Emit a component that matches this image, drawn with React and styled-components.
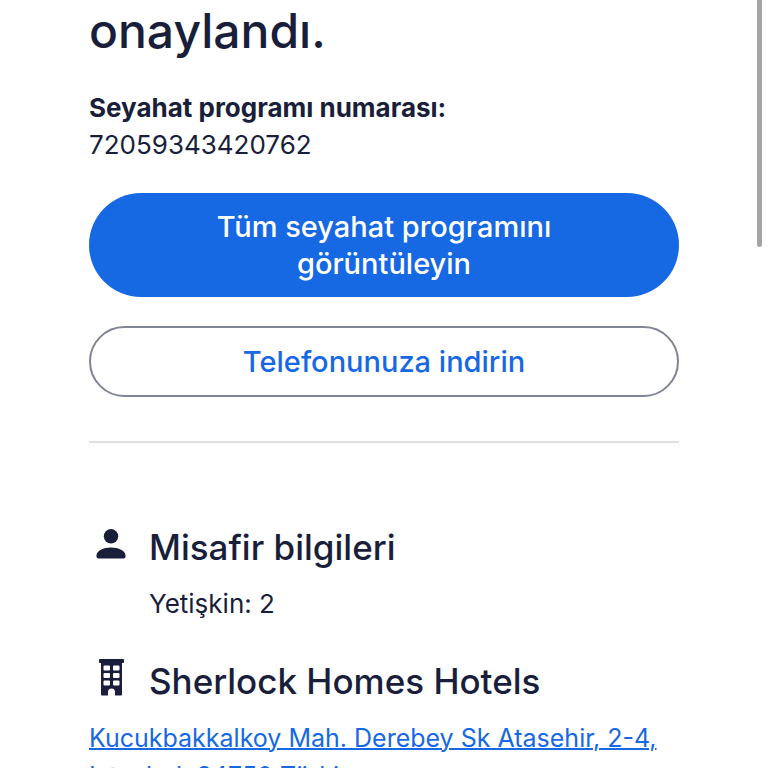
import styled, { createGlobalStyle } from "styled-components";

export default function App() {
    return (
        <>
            <GlobalStyle />
            <ScrollThumb />
            <Page>
                <Title>onaylandı.</Title>
                <Itinerary>
                    <strong>Seyahat programı numarası:</strong>
                    <span>72059343420762</span>
                </Itinerary>
                <Actions>
                    <PrimaryButton>Tüm seyahat programını görüntüleyin</PrimaryButton>
                    <SecondaryButton>Telefonunuza indirin</SecondaryButton>
                </Actions>
                <Divider />
                <Section>
                    <SectionHeader>
                        <PersonIcon />
                        <h2>Misafir bilgileri</h2>
                    </SectionHeader>
                    <Guests>Yetişkin: 2</Guests>
                </Section>
                <Section>
                    <SectionHeader>
                        <HotelIcon />
                        <h2>Sherlock Homes Hotels</h2>
                    </SectionHeader>
                    <Address href="#adres">
                        Kucukbakkalkoy Mah. Derebey Sk Atasehir, 2-4, Istanbul, 34750 Türkiye
                    </Address>
                </Section>
            </Page>
        </>
    )
}

function PersonIcon() {
    return (
        <Icon viewBox="0 0 44 44" aria-hidden="true">
            <circle cx="22" cy="14.3" r="7.2" />
            <path d="M9.500 36.500a2 2 0 0 1-2-2v-1c0-4.800 7-8 14.500-8s14.500 3.200 14.500 8v1a2 2 0 0 1-2 2z" />
        </Icon>
    )
}

function HotelIcon() {
    return (
        <Icon viewBox="0 0 44 44" aria-hidden="true">
            <path
                fillRule="evenodd"
                d="M11 3h23a1 1 0 0 1 1 1v2a1 1 0 0 1-1 1h-1v31.500a1 1 0 0 1-1 1h-6v-3.500a3 3 0 0 0-7 0v3.500h-6a1 1 0 0 1-1-1V7h-1a1 1 0 0 1-1-1V4a1 1 0 0 1 1-1z
                M15.500 9.500h4.500a1 1 0 0 1 1 1v3a1 1 0 0 1-1 1h-4.500a1 1 0 0 1-1-1v-3a1 1 0 0 1 1-1z
                M25 9.500h4.500a1 1 0 0 1 1 1v3a1 1 0 0 1-1 1h-4.500a1 1 0 0 1-1-1v-3a1 1 0 0 1 1-1z
                M15.500 17h4.500a1 1 0 0 1 1 1v3a1 1 0 0 1-1 1h-4.500a1 1 0 0 1-1-1v-3a1 1 0 0 1 1-1z
                M25 17h4.500a1 1 0 0 1 1 1v3a1 1 0 0 1-1 1h-4.500a1 1 0 0 1-1-1v-3a1 1 0 0 1 1-1z
                M15.500 24.500h4.500a1 1 0 0 1 1 1v3a1 1 0 0 1-1 1h-4.500a1 1 0 0 1-1-1v-3a1 1 0 0 1 1-1z
                M25 24.500h4.500a1 1 0 0 1 1 1v3a1 1 0 0 1-1 1h-4.500a1 1 0 0 1-1-1v-3a1 1 0 0 1 1-1z"
            />
        </Icon>
    )
}

const GlobalStyle = createGlobalStyle`
    html {
        scrollbar-width: none;
    }
    body {
        margin: 0;
        background-color: #FFFFFF;
        color: #191E3B;
        font-family: Inter, "Liberation Sans", sans-serif;
        font-size: 26px;
        line-height: 37px;
    }
`
const ScrollThumb = styled.div`
    position: absolute;
    top: 0;
    right: 6px;
    width: 5px;
    height: 247px;
    border-radius: 0 0 3px 3px;
    background-color: #A5A5A5;
`
const Page = styled.main`
    box-sizing: border-box;
    width: 100%;
    padding: 0 89px 40px;
`
const Title = styled.h1`
    margin: 0;
    font-size: 48px;
    font-weight: 500;
    line-height: 62px;
`
const Itinerary = styled.p`
    display: flex;
    flex-direction: column;
    margin: 27px 0 30px;
    strong {
        font-weight: 700;
    }
`
const Actions = styled.div`
    display: flex;
    flex-direction: column;
    gap: 29px;
`
const Button = styled.button`
    box-sizing: border-box;
    width: 100%;
    border-radius: 52px;
    padding: 15px 90px;
    font-family: inherit;
    font-size: 29px;
    font-weight: 500;
    line-height: 37px;
    cursor: pointer;
`
const PrimaryButton = styled(Button)`
    border: none;
    background-color: #1668E3;
    color: #FFFFFF;
`
const SecondaryButton = styled(Button)`
    border: 2px solid #818494;
    background-color: #FFFFFF;
    color: #1668E3;
`
const Divider = styled.hr`
    margin: 44px 0 79px;
    border: none;
    border-top: 2px solid #DFE0E4;
`
const Section = styled.section`
    margin-bottom: 34px;
`
const SectionHeader = styled.div`
    display: flex;
    align-items: flex-start;
    gap: 16px;
    margin-bottom: 13px;
    h2 {
        margin: 0;
        font-size: 35px;
        font-weight: 500;
        line-height: 50px;
    }
`
const Icon = styled.svg`
    flex: none;
    width: 44px;
    height: 44px;
    fill: #191E3B;
`
const Guests = styled.p`
    margin: 0 0 0 60px;
`
const Address = styled.a`
    color: #1668E3;
    font-size: 25px;
    text-decoration: underline;
    text-decoration-thickness: 2px;
`
